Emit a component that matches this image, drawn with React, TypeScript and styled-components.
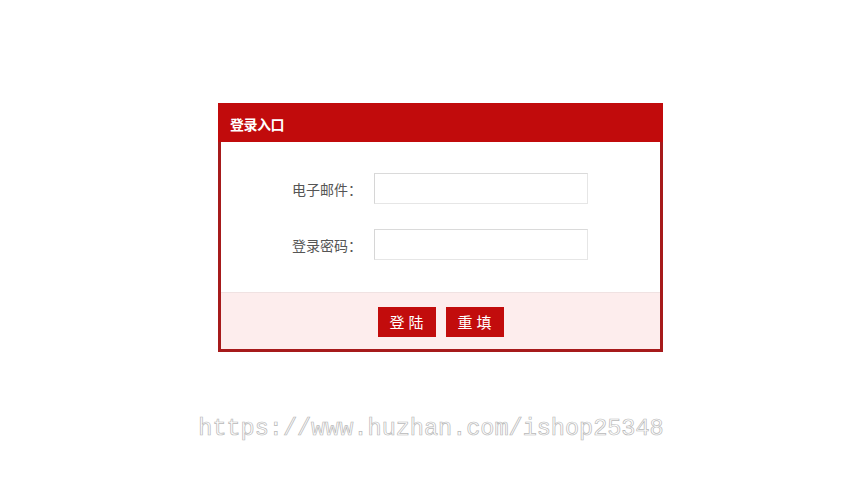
import React from "react";
import styled, { createGlobalStyle } from "styled-components";

const Global = createGlobalStyle`
  html, body { margin: 0; padding: 0; background: #fff; }
  body { font-family: "Noto Sans CJK SC", "Liberation Sans", sans-serif; }
`;

const Page = styled.div`
  width: 862px;
  height: 478px;
  display: flex;
  flex-direction: column;
  overflow: hidden;
`;

const Panel = styled.div`
  margin: 103px 0 0 218px;
  width: 445px;
  box-sizing: border-box;
  border: 3px solid #a61a1b;
  border-top: none;
  display: flex;
  flex-direction: column;
`;

const Header = styled.div`
  height: 39px;
  box-sizing: border-box;
  background: #c10b0c;
  margin: 0 -3px;
  padding: 3px 0 0 12px;
  display: flex;
  align-items: center;
  color: #fff;
  font-size: 14px;
  font-weight: 700;
  letter-spacing: -0.5px;
`;

const Body = styled.div`
  background: #fff;
  padding: 31px 0 32px;
  display: flex;
  flex-direction: column;
  gap: 25px;
`;

const Row = styled.div`
  display: flex;
  align-items: center;
`;

const Label = styled.label`
  width: 153px;
  text-align: right;
  padding-right: 12px;
  box-sizing: border-box;
  font-size: 14px;
  color: #555;
`;

const Input = styled.input`
  width: 214px;
  height: 31px;
  box-sizing: border-box;
  border: 1px solid #e6e6e6;
  border-left-color: #d6d6d6;
  border-top-color: #dadada;
  outline: none;
  background: #fff;
`;

const Footer = styled.div`
  height: 57px;
  box-sizing: border-box;
  background: #fdeded;
  border-top: 1px solid #f0e2e2;
  display: flex;
  align-items: center;
  justify-content: center;
  gap: 10px;
  padding-top: 1px;
`;

const Button = styled.button`
  width: 58px;
  height: 30px;
  border: none;
  background: #c20c0c;
  color: #fff;
  font-family: "Noto Sans CJK SC", sans-serif;
  font-size: 15px;
  letter-spacing: 4px;
  padding: 0 0 0 4px;
  cursor: pointer;
`;

const Watermark = styled.div`
  margin-top: 63px;
  text-align: center;
  font-family: "Liberation Mono", monospace;
  font-size: 23.5px;
  color: #fff;
  -webkit-text-stroke: 0.7px #b8b8b8;
`;

export default function App() {
  return (
    <Page>
      <Global />
      <Panel>
        <Header>登录入口</Header>
        <Body>
          <Row>
            <Label>电子邮件：</Label>
            <Input type="text" />
          </Row>
          <Row>
            <Label>登录密码：</Label>
            <Input type="password" />
          </Row>
        </Body>
        <Footer>
          <Button>登陆</Button>
          <Button>重填</Button>
        </Footer>
      </Panel>
      <Watermark>https://www.huzhan.com/ishop25348</Watermark>
    </Page>
  );
}
